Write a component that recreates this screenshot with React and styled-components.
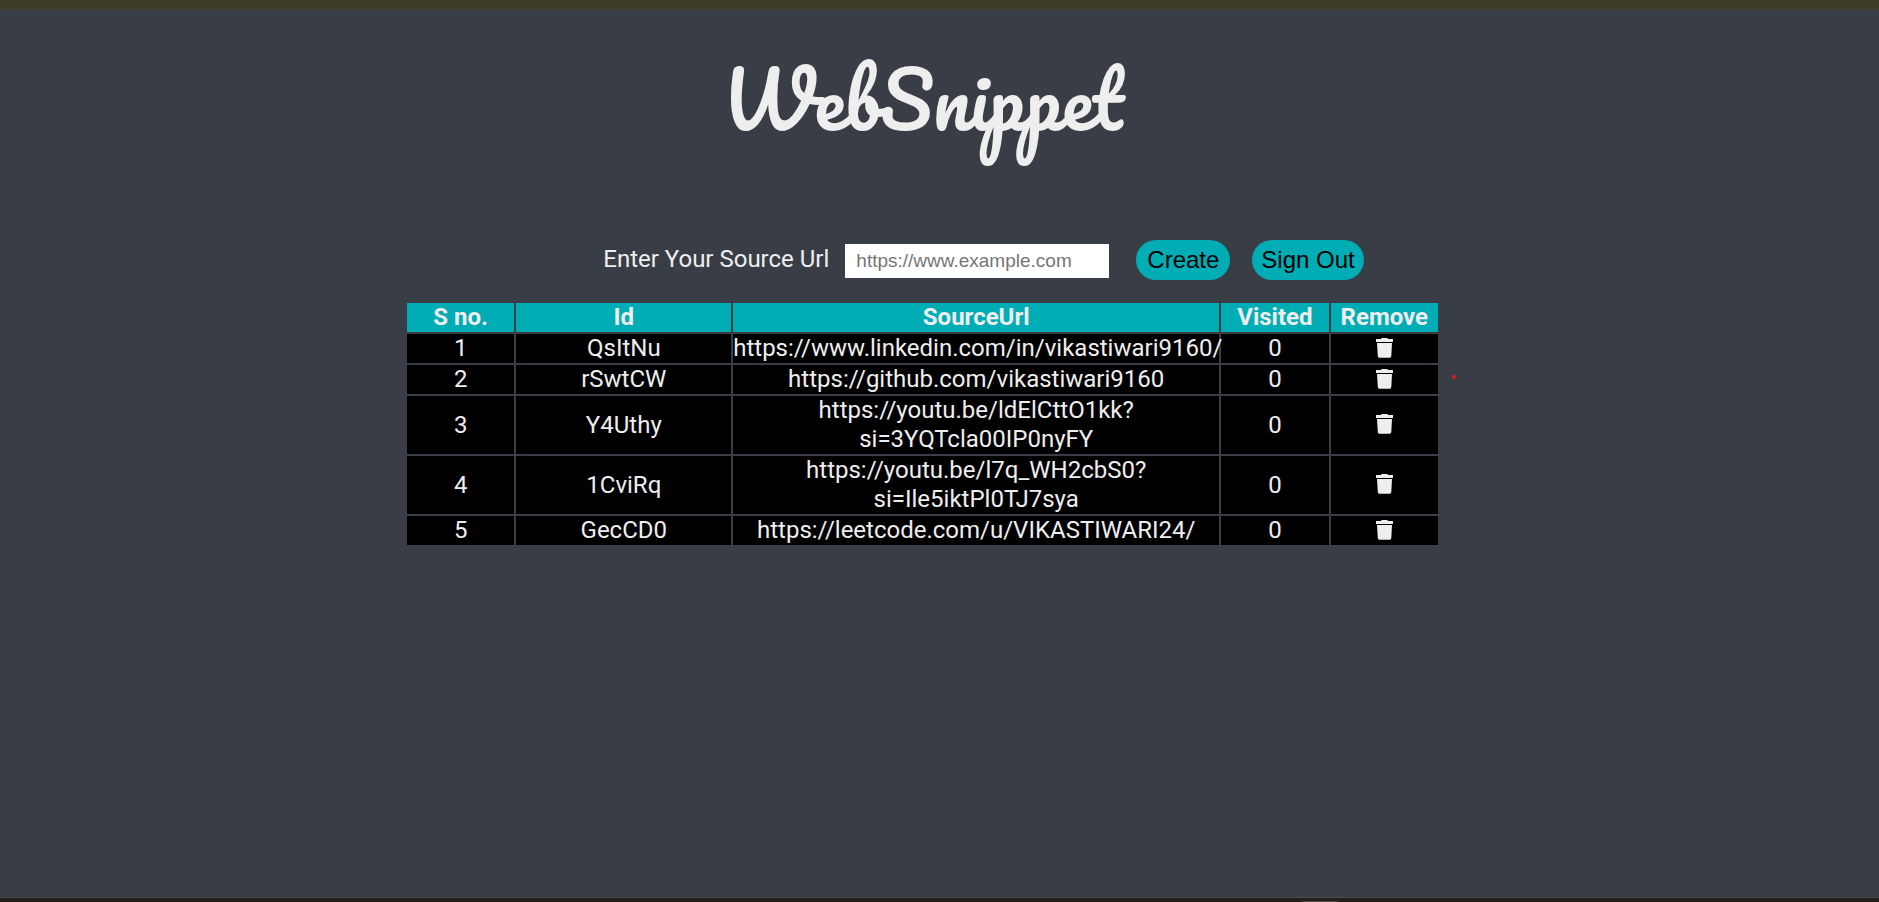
import React from "react";
import styled, { createGlobalStyle } from "styled-components";

const GlobalStyle = createGlobalStyle`
  * {
    box-sizing: border-box;
  }
  body {
    margin: 0;
    background: #393e46;
    color: #eeeeee;
    font-family: Roboto, "Liberation Sans", sans-serif;
    font-size: 24px;
    line-height: 29px;
  }
`;

const Page = styled.div`
  min-height: 100vh;
  display: flex;
  flex-direction: column;
`;

const TopStrip = styled.div`
  height: 10px;
  background: #3c3b26;
  border-bottom: 1px solid #424536;
`;

const BottomStrip = styled.footer`
  height: 5px;
  background: #271f1b;
  border-top: 1px solid #48494a;
  display: flex;
  align-items: flex-end;
  padding-left: 69.3%;
`;

const StripHandle = styled.div`
  width: 36px;
  height: 1px;
  background: #4a4543;
`;

const Main = styled.main`
  flex: 1;
  display: flex;
  flex-direction: column;
  align-items: center;
  padding-right: 34px;
`;

const Title = styled.h1`
  margin: 37px 0 0;
  height: 193px;
  font-family: Pacifico, cursive;
  font-size: 76px;
  font-weight: 400;
  line-height: 104px;
`;

const UrlForm = styled.form`
  display: flex;
  align-items: center;
  height: 40px;
  margin-left: 122px;
`;

const UrlLabel = styled.label`
  margin-right: 16px;
  padding-bottom: 2px;
`;

const UrlInput = styled.input`
  width: 264px;
  height: 34px;
  margin: 2px 27px 0 0;
  padding: 0 11px;
  border: 0;
  background: #ffffff;
  color: #000000;
  font-family: "Liberation Sans", Arial, sans-serif;
  font-size: 19px;
  &::placeholder {
    color: #757575;
  }
`;

const PillButton = styled.button`
  height: 40px;
  padding: 0 ${(p) => (p.$wide ? 9 : 11)}px;
  margin-right: ${(p) => (p.$wide ? 0 : 22)}px;
  border: 0;
  border-radius: 20px;
  background: #00adb5;
  color: #000000;
  font-family: "Liberation Sans", Arial, sans-serif;
  font-size: 24px;
  cursor: pointer;
`;

const TableArea = styled.div`
  position: relative;
  width: 56.1%;
  margin-top: 21px;
`;

const Table = styled.table`
  width: 100%;
  table-layout: fixed;
  border-spacing: 2px;
  text-align: center;
`;

const Column = styled.col`
  width: ${(p) => p.$share}%;
`;

const HeadCell = styled.th`
  padding: 0;
  background: #00adb5;
  font-weight: 700;
`;

const Cell = styled.td`
  padding: 0;
  background: #000000;
  white-space: pre-line;
`;

const RemoveButton = styled.button`
  display: block;
  margin: 0 auto;
  padding: 0 0 2px;
  border: 0;
  background: none;
  color: #eeeeee;
  cursor: pointer;
  svg {
    display: block;
  }
`;

const Marker = styled.span`
  position: absolute;
  top: 74px;
  left: calc(100% + 12px);
  width: 4px;
  height: 4px;
  border-radius: 50%;
  background: #e01b22;
`;

const links = [
  { id: "QsItNu", url: "https://www.linkedin.com/in/vikastiwari9160/", visited: 0 },
  { id: "rSwtCW", url: "https://github.com/vikastiwari9160", visited: 0 },
  { id: "Y4Uthy", url: "https://youtu.be/ldElCttO1kk?\nsi=3YQTcla00IP0nyFY", visited: 0 },
  { id: "1CviRq", url: "https://youtu.be/l7q_WH2cbS0?\nsi=Ile5iktPl0TJ7sya", visited: 0 },
  { id: "GecCD0", url: "https://leetcode.com/u/VIKASTIWARI24/", visited: 0 },
];

const columns = [
  { name: "S no.", share: 10.5 },
  { name: "Id", share: 21 },
  { name: "SourceUrl", share: 47.5 },
  { name: "Visited", share: 10.5 },
  { name: "Remove", share: 10.5 },
];

function TrashIcon() {
  return (
    <svg width="17" height="20" viewBox="0 0 17 20" fill="currentColor" aria-hidden="true">
      <path d="M0 1H4.7L6 0H11L12.3 1H17V4H0Z" />
      <path d="M1 5H16L15.3 18Q15.2 19.7 13.6 19.7H3.4Q1.9 19.7 1.8 18Z" />
    </svg>
  );
}

export default function App() {
  return (
    <Page>
      <GlobalStyle />
      <TopStrip />
      <Main>
        <Title>WebSnippet</Title>
        <UrlForm onSubmit={(e) => e.preventDefault()}>
          <UrlLabel htmlFor="source-url">Enter Your Source Url</UrlLabel>
          <UrlInput id="source-url" type="url" placeholder="https://www.example.com" />
          <PillButton type="submit">Create</PillButton>
          <PillButton type="button" $wide>Sign Out</PillButton>
        </UrlForm>
        <TableArea>
          <Table>
            <colgroup>
              {columns.map((c) => (
                <Column key={c.name} $share={c.share} />
              ))}
            </colgroup>
            <thead>
              <tr>
                {columns.map((c) => (
                  <HeadCell key={c.name} scope="col">{c.name}</HeadCell>
                ))}
              </tr>
            </thead>
            <tbody>
              {links.map((link, i) => (
                <tr key={link.id}>
                  <Cell>{i + 1}</Cell>
                  <Cell>{link.id}</Cell>
                  <Cell>{link.url}</Cell>
                  <Cell>{link.visited}</Cell>
                  <Cell>
                    <RemoveButton type="button" aria-label={`Remove ${link.id}`}>
                      <TrashIcon />
                    </RemoveButton>
                  </Cell>
                </tr>
              ))}
            </tbody>
          </Table>
          <Marker />
        </TableArea>
      </Main>
      <BottomStrip>
        <StripHandle />
      </BottomStrip>
    </Page>
  );
}
